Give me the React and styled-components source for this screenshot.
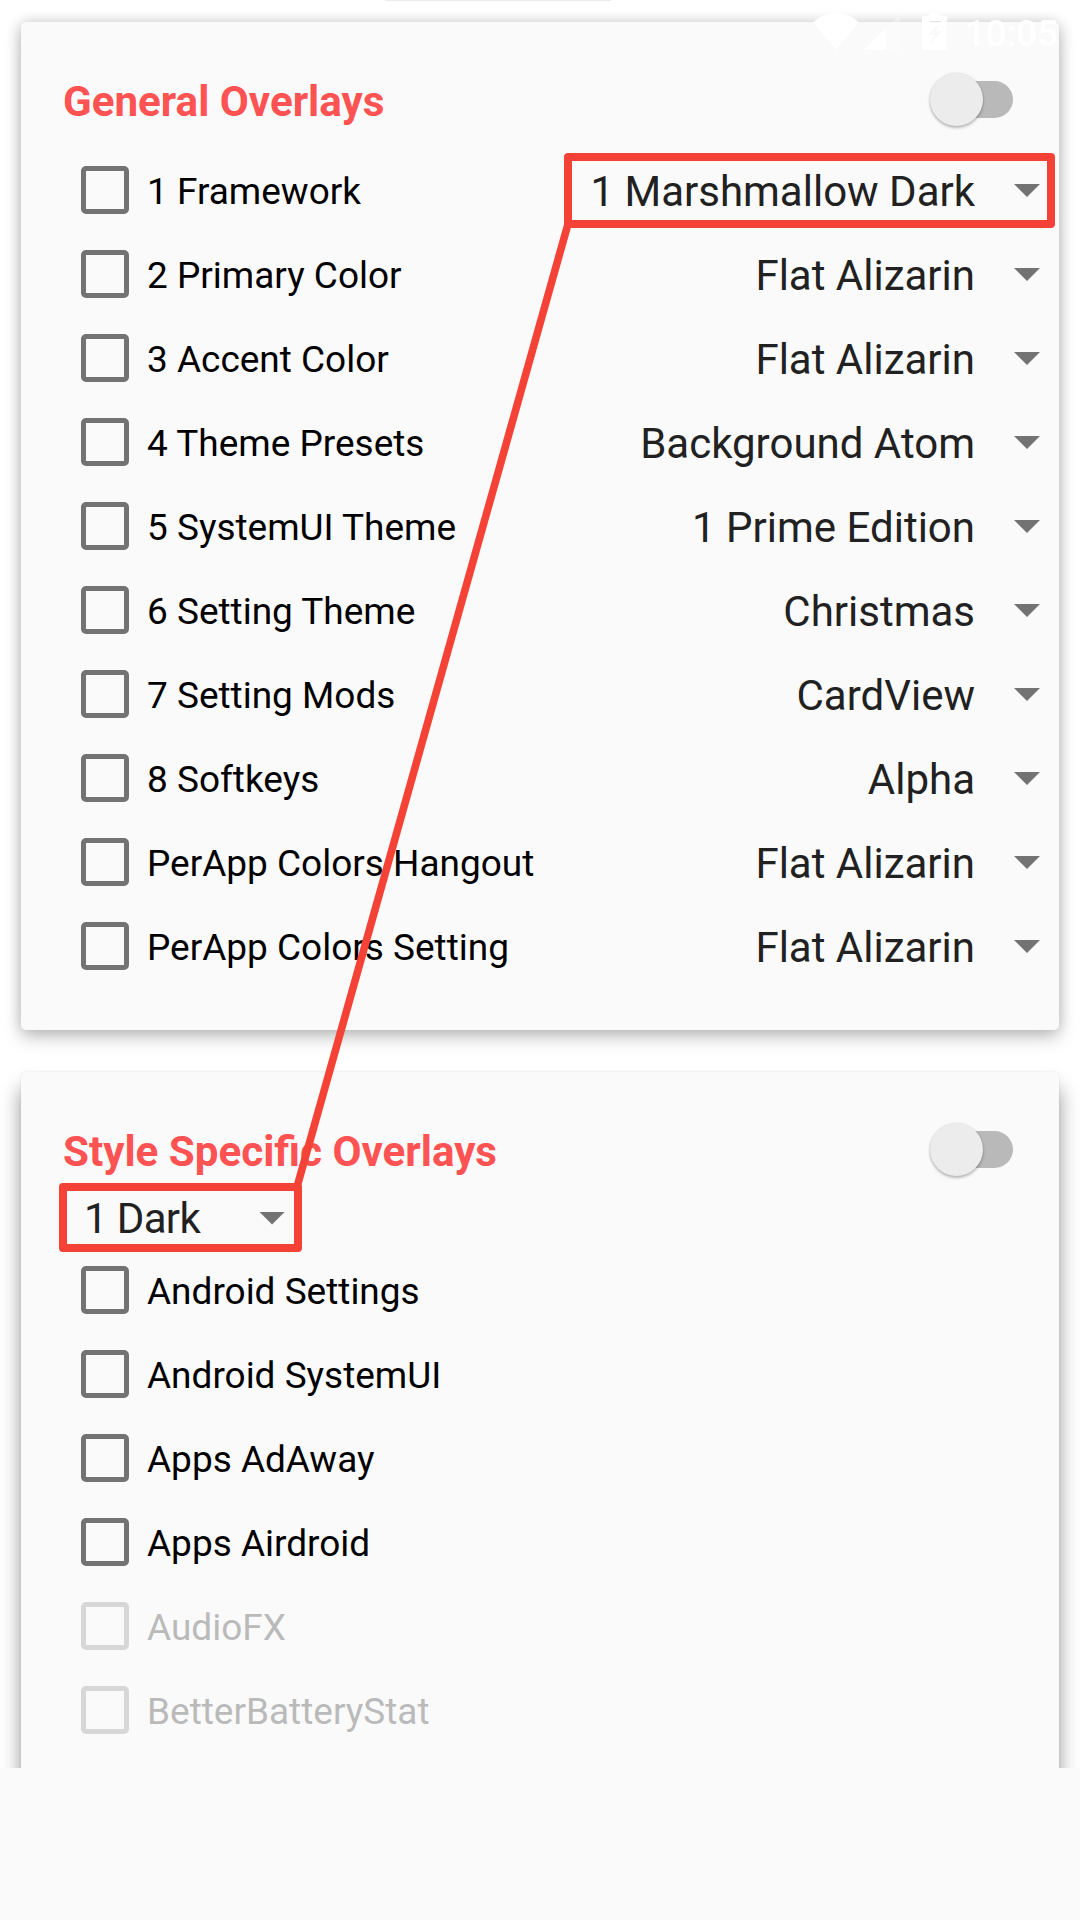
import React from 'react';
import styled, { createGlobalStyle } from 'styled-components';

const GlobalStyle = createGlobalStyle`
  *, *::before, *::after { box-sizing: border-box; }
  html, body { margin: 0; padding: 0; background: #fafafa; }
  body { font-family: Roboto, "Liberation Sans", sans-serif; }
`;

const Screen = styled.main`
  position: relative;
  width: 1080px;
  height: 1920px;
  overflow: hidden;
  background: #fafafa;
`;

const ScrollArea = styled.div`
  display: flex;
  flex-direction: column;
  gap: 42px;
  height: 1768px;
  padding: 22px 21px 0;
  overflow: hidden;
  background: #fff;
`;

const TopDivider = styled.div`
  position: absolute;
  top: 0;
  left: 385px;
  width: 226px;
  height: 1px;
  background: #ececec;
`;

const Card = styled.section`
  display: flex;
  flex-direction: column;
  flex: none;
  height: ${(p) => p.$height}px;
  padding-top: 42px;
  border-radius: 5px;
  background: #fafafa;
  box-shadow: ${(p) => p.$shadow};
`;

const Header = styled.header`
  display: flex;
  flex: none;
  align-items: center;
  justify-content: space-between;
  height: 71px;
  margin-bottom: ${(p) => p.$gap || 0}px;
  padding: 0 46px 0 42px;
`;

const Title = styled.h2`
  margin: 0;
  padding-top: 4px;
  font-size: 42.15px;
  font-weight: 700;
  line-height: 50px;
  white-space: nowrap;
  color: #ff5252;
`;

const Track = styled.div`
  display: flex;
  align-items: center;
  width: 78px;
  height: 37px;
  border-radius: 19px;
  background: #b9b9b9;
`;

const Thumb = styled.div`
  flex: none;
  width: 53px;
  height: 53px;
  margin-left: -5px;
  border-radius: 50%;
  background: #ececec;
  box-shadow: 0 2px 3px rgba(0, 0, 0, 0.26), 0 0 2px rgba(0, 0, 0, 0.12);
`;

const Row = styled.div`
  display: flex;
  flex: none;
  align-items: center;
  height: 84px;
  padding: 0 19px 0 42px;
`;

const CheckArea = styled.span`
  display: flex;
  flex: none;
  justify-content: center;
  width: 84px;
`;

const CheckBox = styled.span`
  width: 48px;
  height: 48px;
  border: 5.5px solid ${(p) => (p.$disabled ? '#d7d7d7' : '#737373')};
  border-radius: 5px;
`;

const Label = styled.span`
  flex: 1;
  padding-top: 3px;
  font-size: 36.98px;
  line-height: 44px;
  white-space: nowrap;
  color: ${(p) => (p.$disabled ? '#bababa' : '#000')};
`;

const Select = styled.div`
  position: relative;
  display: flex;
  align-items: center;
  gap: ${(p) => p.$gap}px;
`;

const Value = styled.span`
  padding-top: 3px;
  font-size: 42px;
  line-height: 50px;
  letter-spacing: ${(p) => p.$tracking || 0}px;
  white-space: nowrap;
  color: #212121;
`;

const Caret = styled.span`
  width: 26px;
  height: 13px;
  margin-top: 1px;
  background: #737373;
  clip-path: polygon(0 0, 100% 0, 50% 100%);
`;

const StyleRow = styled.div`
  display: flex;
  flex: none;
  align-items: center;
  height: 63px;
  padding: 2px 0 0 63px;
`;

const Highlight = styled.span`
  position: absolute;
  top: ${(p) => p.$top}px;
  right: ${(p) => p.$right}px;
  width: ${(p) => p.$width}px;
  height: ${(p) => p.$height}px;
  border: 8px solid #f44336;
  border-radius: 4px;
`;

const Connector = styled.svg`
  position: absolute;
  inset: 0;
  pointer-events: none;
`;

const StatusBar = styled.div`
  position: absolute;
  top: 0;
  right: 22px;
  display: flex;
  align-items: center;
  height: 63px;
  color: #fff;
`;

const StatusIcon = styled.svg`
  display: block;
  flex: none;
  margin-right: ${(p) => p.$gap}px;
`;

const Clock = styled.span`
  padding-top: 4px;
  font-size: 36.75px;
  font-weight: 500;
  line-height: 44px;
`;

const general = [
  ['1 Framework', '1 Marshmallow Dark', true],
  ['2 Primary Color', 'Flat Alizarin'],
  ['3 Accent Color', 'Flat Alizarin'],
  ['4 Theme Presets', 'Background Atom'],
  ['5 SystemUI Theme', '1 Prime Edition'],
  ['6 Setting Theme', 'Christmas'],
  ['7 Setting Mods', 'CardView'],
  ['8 Softkeys', 'Alpha'],
  ['PerApp Colors Hangout', 'Flat Alizarin'],
  ['PerApp Colors Setting', 'Flat Alizarin'],
];

const specific = [
  ['Android Settings'],
  ['Android SystemUI'],
  ['Apps AdAway'],
  ['Apps Airdroid'],
  ['AudioFX', true],
  ['BetterBatteryStat', true],
];

function Switch() {
  return (
    <Track>
      <Thumb />
    </Track>
  );
}

function Option({ label, disabled, children }) {
  return (
    <Row>
      <CheckArea>
        <CheckBox $disabled={disabled} />
      </CheckArea>
      <Label $disabled={disabled}>{label}</Label>
      {children}
    </Row>
  );
}

export default function App() {
  return (
    <>
      <GlobalStyle />
      <Screen>
        <ScrollArea>
          <Card $height={1008} $shadow="0 8px 18px rgba(0,0,0,.2), 0 0 14px rgba(0,0,0,.18)">
            <Header $gap={13}>
              <Title>General Overlays</Title>
              <Switch />
            </Header>
            {general.map(([label, value, marked]) => (
              <Option key={label} label={label}>
                <Select $gap={39}>
                  <Value>{value}</Value>
                  <Caret />
                  {marked && <Highlight $top={-11} $right={-15} $width={491} $height={75} />}
                </Select>
              </Option>
            ))}
          </Card>
          <Card $height={1008} $shadow="0 16px 20px rgba(0,0,0,.42), 0 0 3px rgba(0,0,0,.08)">
            <Header>
              <Title>Style Specific Overlays</Title>
              <Switch />
            </Header>
            <StyleRow>
              <Select $gap={59}>
                <Value $tracking={-0.65}>1 Dark</Value>
                <Caret />
                <Highlight $top={-8} $right={-17} $width={243} $height={69} />
              </Select>
            </StyleRow>
            {specific.map(([label, disabled]) => (
              <Option key={label} label={label} disabled={disabled} />
            ))}
          </Card>
        </ScrollArea>
        <TopDivider />
        <Connector width="1080" height="1920" viewBox="0 0 1080 1920">
          <path d="M568 224L297 1187" stroke="#f44336" strokeWidth="7.6" fill="none" />
        </Connector>
        <StatusBar>
          <StatusIcon $gap={5} width="46" height="37" viewBox="0 0 46 37" fill="currentColor">
            <path d="M23 37L0 9Q10 0 23 0T46 9Z" />
          </StatusIcon>
          <StatusIcon $gap={22} width="36" height="36" viewBox="0 0 36 36" fill="currentColor">
            <path d="M36 0V36H0Z" opacity=".3" />
            <path d="M22 14V36H0Z" />
          </StatusIcon>
          <StatusIcon $gap={18} width="25" height="37" viewBox="0 0 25 37" fill="currentColor">
            <path
              fillRule="evenodd"
              d="M7 0H18V3H25V37H0V3H7ZM8 8V9.5H19V8ZM16 11L6 22H12L8 32L20 18H14Z"
            />
          </StatusIcon>
          <Clock>10:05</Clock>
        </StatusBar>
      </Screen>
    </>
  );
}
